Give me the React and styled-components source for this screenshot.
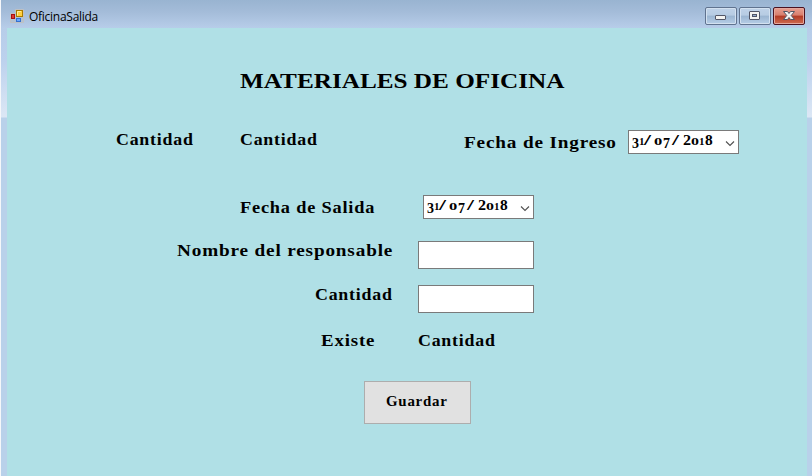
import React from 'react';
import styled, { createGlobalStyle } from 'styled-components';

const Global = createGlobalStyle`
  *{box-sizing:border-box}
  body{margin:0;overflow:hidden;background:#b9d1ea}
`;
const Window = styled.div`
  width:812px;height:476px;display:flex;flex-direction:column;
  border-left:1px solid #f5f7fa;
  background:linear-gradient(#99b4d1 0,#a4bcd9 12px,#b7cde9 28px,#bcd1ed 60px,#dce7f5 117px,#b9d1ea 118px);
`;
const TitleBar = styled.header`
  height:28px;flex:none;display:flex;align-items:flex-start;padding:7px 7px 0 9px;
`;
const AppIcon = styled.svg`width:14px;height:14px;margin-top:2px;flex:none;`;
const Caption = styled.span`
  font:12px/18px "Open Sans","Noto Sans",sans-serif;color:#000;margin:1px 0 0 5px;
  letter-spacing:-0.27px;flex:1;
`;
const Controls = styled.div`display:flex;gap:2px;`;
const Control = styled.button`
  width:32px;height:18px;padding:0;border-radius:2px;display:block;
  border:1px solid ${p => (p.$close ? '#4b1220' : '#60738f')};
  box-shadow:inset 0 0 0 1px ${p => (p.$close ? '#e5a79d' : '#d3e1f0')};
  background:${p => (p.$close
    ? 'linear-gradient(#e7a092 0,#d87e6d 45%,#b23a25 50%,#cf6c50 100%)'
    : 'linear-gradient(#bfd2e8 0,#b7cce3 45%,#9bb5d1 50%,#b6cee7 100%)')};
  svg{display:block;width:30px;height:16px}
`;
const Form = styled.main`
  width:800px;flex:1;margin-left:6px;padding-top:37px;background:#b0e0e6;
  font-family:"Liberation Serif",serif;font-weight:bold;color:#000;
`;
const Row = styled.div`
  display:flex;align-items:flex-start;height:${p => p.$h}px;padding-left:${p => p.$left}px;
`;
const Label = styled.label`
  display:block;flex:none;width:${p => p.$w}px;margin-top:${p => p.$top || 0}px;
  margin-right:${p => p.$gap || 0}px;
  font-size:16px;line-height:20px;white-space:nowrap;letter-spacing:.7px;
  span{display:inline-block;transform:scaleX(${p => p.$stretch});transform-origin:left}
`;
const Heading = styled.h1`
  margin:0;font-size:21px;line-height:32px;white-space:nowrap;width:272px;
  transform:scaleX(1.2);transform-origin:left;
`;
const DateBox = styled.div`
  width:111px;height:24px;flex:none;border:1px solid #7a7a7a;background:#fff;
  display:flex;justify-content:space-between;padding:0 3px 0 3px;
  svg{width:10px;height:10px;margin-top:8px}
`;
const DateText = styled.span`
  display:flex;align-items:baseline;line-height:19px;height:19px;
`;
const Digit = styled.span`
  display:block;width:${p => p.$w}px;font-size:${p => p.$size}px;
  transform:translateY(${p => p.$drop}px) scaleX(${p => p.$stretch});transform-origin:left;
`;
const TextInput = styled.input`
  width:116px;height:28px;padding:2px 4px;border:1px solid #7a7a7a;background:#fff;
  outline:0;font:inherit;
`;
const SaveButton = styled.button`
  width:107px;height:43px;border:1px solid #adadad;background:#e1e1e1;padding:0 0 2px 21px;
  font:bold 14px/18px "Liberation Serif",serif;color:#000;text-align:left;letter-spacing:.7px;
  span{display:inline-block;transform:scaleX(1.065);transform-origin:left}
`;

const Text = ({ children, ...p }) => <Label {...p}><span>{children}</span></Label>;

// Old-style figures: character, advance, descent, size, horizontal stretch
const glyphs = [
  ['3', 7, 3, 14, 1], ['1', 5, 0, 11, 1], ['/', 10, 0, 14, 1.8],
  ['0', 9, 0, 11, 1.5], ['7', 9, 3, 14, 1], ['/', 11, 0, 14, 1.8],
  ['2', 8, 0, 14, 1.15], ['0', 8, 0, 11, 1.45], ['1', 6, 0, 11, 1], ['8', 8, 0, 14, 1.1],
];
const DatePicker = () => (
  <DateBox>
    <DateText>
      {glyphs.map(([c, w, drop, size, stretch], i) => (
        <Digit key={i} $w={w} $drop={drop} $size={size} $stretch={stretch}>{c}</Digit>
      ))}
    </DateText>
    <svg viewBox="0 0 10 10"><path d="M1 2.5 5 6.5 9 2.5" fill="none" stroke="#505050" strokeWidth="1.1" /></svg>
  </DateBox>
);

export default function App() {
  return (
    <>
      <Global />
      <Window>
        <TitleBar>
          <AppIcon viewBox="0 0 14 14">
            <path d="M.5 4.5h5v-4h8v13h-13z" fill="#b3c1d1" stroke="#bfc0c2" />
            <rect x="1.5" y="5.5" width="3" height="4" fill="#df3a2d" stroke="#a80f13" />
            <rect x="6.5" y="1.5" width="6" height="6" fill="#ffcf3f" stroke="#a97b00" />
            <path d="M7.5 6.5v-4H11" fill="none" stroke="#ffef9a" />
            <rect x="6.5" y="9.5" width="4" height="3" fill="#69a7ff" stroke="#3470cf" />
          </AppIcon>
          <Caption>OficinaSalida</Caption>
          <Controls>
            <Control aria-label="Minimizar">
              <svg viewBox="0 0 30 16"><rect x="9.5" y="7.5" width="10" height="4" rx=".5" fill="#f3f3f1" stroke="#535666" /></svg>
            </Control>
            <Control aria-label="Maximizar">
              <svg viewBox="0 0 30 16">
                <rect x="9.5" y="3.5" width="10" height="8" rx=".5" fill="#f3f3f1" stroke="#535666" />
                <rect x="12.5" y="6.5" width="4" height="2" fill="#91abd0" stroke="#535666" />
              </svg>
            </Control>
            <Control $close aria-label="Cerrar">
              <svg viewBox="0 0 30 16">
                <path d="M9.5 3.5h4l1.5 2 1.5-2h4l-3.3 4 3.3 4h-4l-1.5-2-1.5 2h-4l3.3-4z" fill="#f3f3f1" stroke="#535666" />
              </svg>
            </Control>
          </Controls>
        </TitleBar>
        <Form>
          <Row $h={65} $left={233}><Heading>MATERIALES DE OFICINA</Heading></Row>
          <Row $h={65} $left={109}>
            <Text $w={77} $gap={47} $stretch={1.115}>Cantidad</Text>
            <Text $w={77} $gap={147} $stretch={1.115}>Cantidad</Text>
            <Text $w={152} $gap={12} $top={3} $stretch={1.2}>Fecha de Ingreso</Text>
            <DatePicker />
          </Row>
          <Row $h={46} $left={233}>
            <Text $w={134} $gap={49} $top={3} $stretch={1.145}>Fecha de Salida</Text>
            <DatePicker />
          </Row>
          <Row $h={44} $left={170}>
            <Text $w={215} $gap={26} $stretch={1.2}>Nombre del responsable</Text>
            <TextInput />
          </Row>
          <Row $h={46} $left={308}>
            <Text $w={77} $gap={26} $stretch={1.115}>Cantidad</Text>
            <TextInput />
          </Row>
          <Row $h={50} $left={314}>
            <Text $w={54} $gap={43} $stretch={1.18}>Existe</Text>
            <Text $w={77} $stretch={1.115}>Cantidad</Text>
          </Row>
          <Row $h={43} $left={357}><SaveButton><span>Guardar</span></SaveButton></Row>
        </Form>
      </Window>
    </>
  );
}
